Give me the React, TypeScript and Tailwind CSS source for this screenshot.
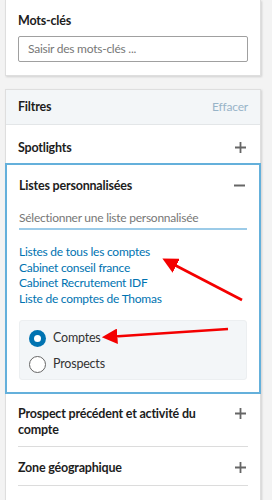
import React from "react";

const lists = [
  "Listes de tous les comptes",
  "Cabinet conseil france",
  "Cabinet Recrutement IDF",
  "Liste de comptes de Thomas",
];

function Plus() {
  return (
    <svg width="11" height="11" viewBox="0 0 11 11" className="shrink-0">
      <path d="M5.5 0v11M0 5.5h11" stroke="#666" strokeWidth="1.8" />
    </svg>
  );
}

function Minus() {
  return (
    <svg width="11" height="11" viewBox="0 0 11 11" className="shrink-0">
      <path d="M0 5.5h11" stroke="#666" strokeWidth="2" />
    </svg>
  );
}

function Radio({ checked }: { checked: boolean }) {
  return checked ? (
    <span className="w-[17px] h-[17px] rounded-full bg-[#0073b1] flex items-center justify-center shrink-0">
      <span className="w-[7px] h-[7px] rounded-full bg-white" />
    </span>
  ) : (
    <span className="w-[17px] h-[17px] rounded-full border-[1.5px] border-[#666] bg-white shrink-0" />
  );
}

export default function App() {
  return (
    <div
      className="relative w-[272px] h-[500px] overflow-hidden bg-[#f3f3f3]"
      style={{ fontFamily: 'Lato, "Open Sans", sans-serif' }}
    >
      {/* mots-clés */}
      <div className="ml-[5px] w-[256px] bg-white border-b border-x border-[#dedede] shadow-[1px_1px_2px_rgba(0,0,0,0.15)] px-[12px] pt-[12px] pb-[13px]">
        <h3 className="text-[12.5px] leading-[18px] font-bold text-[#1d1d1d] tracking-[-0.2px] mb-[6px]">
          Mots-clés
        </h3>
        <div className="h-[26px] border border-[#a0a0a0] rounded-[2px] flex items-center px-[9px] text-[12px] tracking-[-0.25px] text-[#777]">
          Saisir des mots-clés ...
        </div>
      </div>

      {/* filtres */}
      <div className="mt-[13px] ml-[5px] w-[256px] bg-white border border-[#dedede] shadow-[1px_1px_2px_rgba(0,0,0,0.15)]">
        <div className="h-[35px] bg-[#f3f6f8] border-b border-[#e3e6e8] flex items-center justify-between px-[12px]">
          <span className="text-[12.5px] font-bold tracking-[-0.2px] text-[#1d1d1d]">Filtres</span>
          <span className="text-[12px] tracking-[-0.2px] text-[#98b4c8]">Effacer</span>
        </div>
        <div className="h-[38px] flex items-start justify-between px-[12px] pt-[14px]">
          <span className="text-[12.5px] leading-[18px] font-bold tracking-[-0.2px] text-[#1d1d1d]">Spotlights</span>
          <span className="mt-[3px] mr-[2px]"><Plus /></span>
        </div>

        <div className="-mx-px border-2 border-[#64b0db] px-[12px] pt-[12px] pb-[12px]">
          <div className="flex items-start justify-between">
            <span className="text-[12.5px] leading-[18px] font-bold tracking-[-0.2px] text-[#1d1d1d]">
              Listes personnalisées
            </span>
            <span className="mt-[3px] mr-[2px]"><Minus /></span>
          </div>
          <div className="mt-[14px] border-b-2 border-[#9ccbe8] text-[12px] leading-[18px] tracking-[-0.25px] text-[#777] pb-[1px]">
            Sélectionner une liste personnalisée
          </div>
          <div className="mt-[14px] flex flex-col">
            {lists.map((l) => (
              <span key={l} className="text-[12px] leading-[15.7px] tracking-[-0.25px] text-[#0073b1]">
                {l}
              </span>
            ))}
          </div>
          <div className="mt-[13px] bg-[#f3f6f8] border border-[#eceff1] rounded-[3px] pl-[9px] pt-[8px] pb-[4px] flex flex-col gap-[6px]">
            <label className="h-[20px] flex items-center gap-[7px] text-[12.5px] tracking-[-0.2px] text-[#333]">
              <Radio checked />
              Comptes
            </label>
            <label className="h-[20px] flex items-center gap-[7px] text-[12.5px] tracking-[-0.2px] text-[#333]">
              <Radio checked={false} />
              Prospects
            </label>
          </div>
        </div>

        <div className="mx-[12px] border-b border-[#dcdcdc] flex items-start justify-between pt-[12px] pb-[8px]">
          <span className="text-[12.5px] leading-[16px] font-bold tracking-[-0.2px] text-[#1d1d1d] w-[200px]">
            Prospect précédent et activité du compte
          </span>
          <span className="mt-[2px] mr-[2px]"><Plus /></span>
        </div>
        <div className="mx-[12px] border-b border-[#dcdcdc] flex items-start justify-between pt-[12px] pb-[8px]">
          <span className="text-[12.5px] leading-[18px] font-bold tracking-[-0.2px] text-[#1d1d1d]">
            Zone géographique
          </span>
          <span className="mt-[3px] mr-[2px]"><Plus /></span>
        </div>
        <div className="h-[40px]" />
      </div>

      {/* annotation arrows */}
      <svg className="absolute inset-0 pointer-events-none" width="272" height="500">
        <defs>
          <marker id="head" markerWidth="6" markerHeight="6" refX="4" refY="3" orient="auto">
            <path d="M0 0L6 3L0 6z" fill="#f40000" />
          </marker>
        </defs>
        <line x1="242" y1="300" x2="167" y2="261" stroke="#f40000" strokeWidth="2.6" markerEnd="url(#head)" />
        <line x1="228" y1="329" x2="107" y2="337" stroke="#f40000" strokeWidth="2.6" markerEnd="url(#head)" />
      </svg>
    </div>
  );
}
